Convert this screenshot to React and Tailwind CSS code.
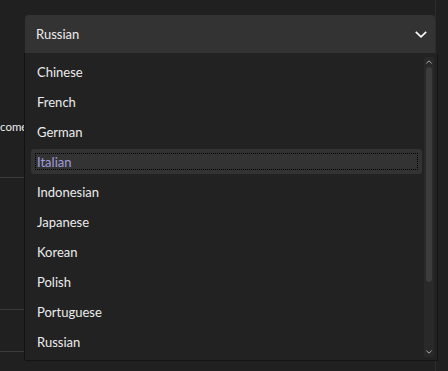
import React from 'react';

const languages = ['Chinese', 'French', 'German', 'Italian', 'Indonesian', 'Japanese', 'Korean', 'Polish', 'Portuguese', 'Russian'];

function Chevron({ className }) {
  return (
    <svg className={className} viewBox="0 0 12 7" fill="none">
      <path d="M0.8 0.8 L6 5.8 L11.2 0.8" stroke="currentColor" strokeWidth="1.6" />
    </svg>
  );
}

export default function App() {
  const selected = 'Italian';

  return (
    <div className="relative w-[448px] h-[371px] overflow-hidden bg-[#202020] text-[#ececec] font-['Lato',sans-serif] text-[13px]">
      {/* settings page behind the dropdown */}
      <div className="flex h-full">
        <div className="w-[25px] shrink-0 flex flex-col">
          <div className="h-[118px]" />
          <div className="whitespace-nowrap leading-[18px] text-[11.5px]">come</div>
          <div className="h-[41px]" />
          <div className="h-px w-[24px] bg-[#3a3a3a]" />
          <div className="h-[131px]" />
          <div className="h-px w-[24px] bg-[#3a3a3a]" />
          <div className="h-[41px]" />
          <div className="h-px w-[24px] bg-[#3a3a3a]" />
        </div>
        <div className="w-[411px] flex flex-col border-r border-[#2c2c2c]">
          <div className="mt-[15px] h-[38px] bg-[#333333] rounded-t-[4px] flex items-center pl-[11px] pr-[8px]">
            <span className="flex-1 pt-[2px]">Russian</span>
            <Chevron className="w-[12px] h-[7px] text-white" />
          </div>
        </div>
      </div>

      {/* open list */}
      <div className="absolute left-[24px] top-[53px] w-[413px] h-[307px] bg-[#222222] border-l border-[#111] shadow-[1px_1px_0_#141414] flex">
        <div className="flex-1 pt-[6px] pl-[6px] pr-[2px]">
          {languages.map((lang) => (
            <div
              key={lang}
              className={`h-[25px] mb-[5px] rounded-[3px] flex items-center ${lang === selected ? 'bg-[#333333] p-[4px]' : 'px-[6px]'}`}
            >
              {lang === selected ? (
                <div className="flex-1 h-full flex items-center pl-[1px] pt-[2px] border border-dotted border-black text-[#a09ddc]">
                  {lang}
                </div>
              ) : (
                <span className="pt-[3px]">{lang}</span>
              )}
            </div>
          ))}
        </div>
        <div className="w-[10px] mt-[4px] mb-[3px] mr-[3px] bg-[#292929] rounded-[2px] flex flex-col items-center">
          <Chevron className="w-[6px] h-[4px] mt-[3px] rotate-180 text-[#cfcfcf]" />
          <div className="w-[6px] h-[215px] mt-[3px] rounded-full bg-[#3c3c3c]" />
          <div className="flex-1" />
          <Chevron className="w-[6px] h-[4px] mb-[3px] text-[#cfcfcf]" />
        </div>
      </div>
    </div>
  );
}
